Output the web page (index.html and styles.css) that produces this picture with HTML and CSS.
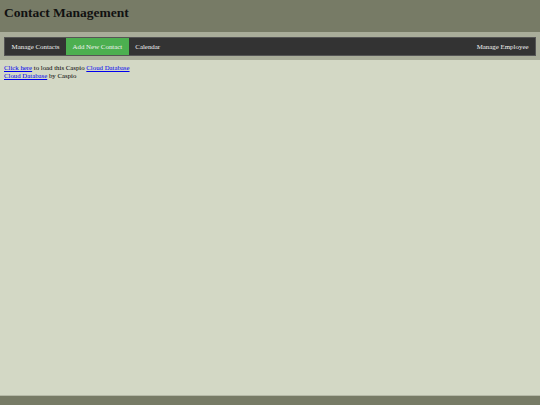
FILE: index.html
```html
<!DOCTYPE html>
<html>
<head>
<meta charset="utf-8">
<link rel="stylesheet" href="styles.css">
</head>
<body>
<div class="page">
  <header class="header">
    <h1 class="title">Contact Management</h1>
  </header>
  <div class="navband">
    <nav class="nav">
      <a class="nav-item" href="#">Manage Contacts</a>
      <a class="nav-item active" href="#">Add New Contact</a>
      <a class="nav-item" href="#">Calendar</a>
      <a class="nav-item right" href="#">Manage Employee</a>
    </nav>
  </div>
  <main class="content">
    <div class="line"><a href="#">Click here</a> to load this Caspio <a href="#">Cloud Database</a></div>
    <div class="line"><a href="#">Cloud Database</a> by Caspio</div>
  </main>
  <footer class="footer"></footer>
</div>
</body>
</html>
```

FILE: styles.css
```css
html, body {
  margin: 0;
  padding: 0;
  height: 100%;
}
body {
  font-family: "Liberation Serif", "Times New Roman", serif;
  background: #d3d8c5;
  color: #000;
}
.page {
  display: flex;
  flex-direction: column;
  height: 405px;
}
.header {
  background: #777b66;
  height: 32px;
  padding: 0 4px;
  box-sizing: border-box;
}
.title {
  margin: 0;
  padding-top: 4px;
  font-size: 13.5px;
  line-height: 18px;
  font-weight: bold;
  color: #111;
}
.navband {
  background: #a9ad9a;
  padding: 5px 4px 4px;
}
.nav {
  display: flex;
  background: #333333;
  height: 19px;
  border: 1px solid #555;
  box-sizing: border-box;
}
.nav-item {
  display: flex;
  align-items: center;
  padding: 0 6.5px 1px;
  color: #f2f2f2;
  text-decoration: none;
  font-size: 6.9px;
}
.nav-item.active {
  background: #4caf50;
}
.nav-item.right {
  margin-left: auto;
}
.content {
  flex: 1;
  padding: 4px 4px;
  font-size: 6.8px;
  line-height: 8px;
  border-bottom: 1px solid #b5b9a7;
}
.content a {
  color: #0000ee;
}
.footer {
  background: #777b66;
  height: 9px;
}
```
